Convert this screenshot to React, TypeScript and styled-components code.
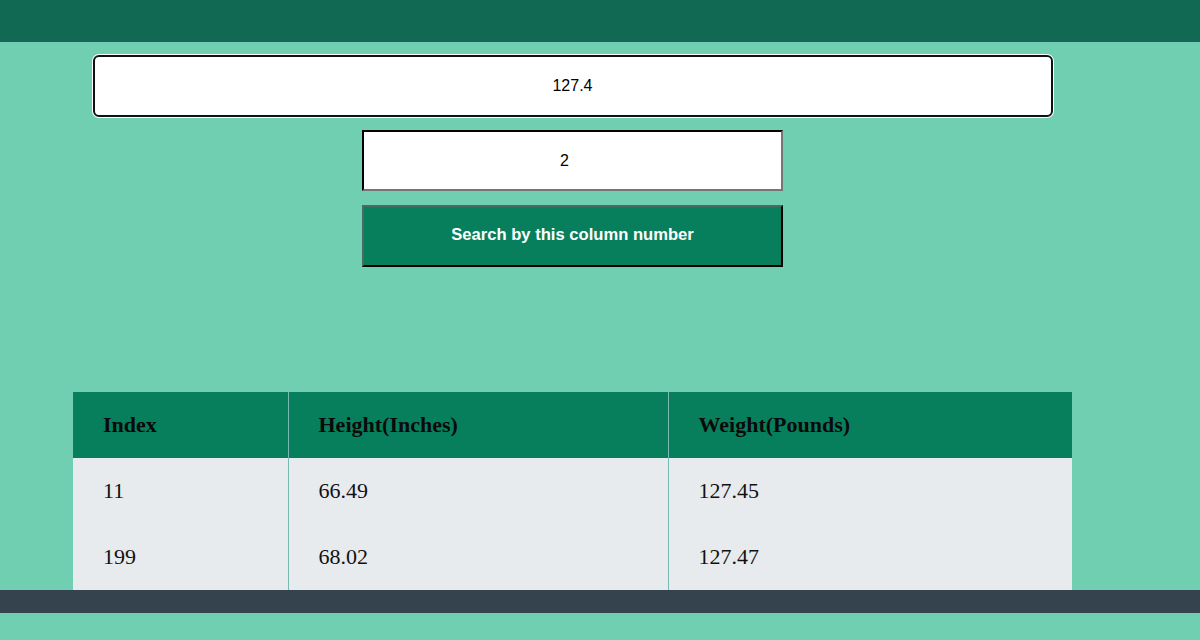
import React, { useState } from "react";
import styled, { createGlobalStyle } from "styled-components";

const GlobalStyle = createGlobalStyle`
  html, body { margin: 0; padding: 0; background: #6fcfb0; }
  body { font-family: "Liberation Serif", "Times New Roman", serif; }
`;

const Page = styled.div`
  min-height: 640px;
  background: #6fcfb0;
  display: flex;
  flex-direction: column;
`;

const TopBar = styled.header`
  height: 42px;
  background: #116853;
`;

const Main = styled.main`
  width: 1145px;
  display: flex;
  flex-direction: column;
  align-items: center;
`;

const SearchInput = styled.input`
  box-sizing: border-box;
  margin-top: 13px;
  width: 960px;
  height: 62px;
  border: 2px solid #111;
  border-radius: 6px;
  box-shadow: 0 0 0 1px #ffffff;
  outline: none;
  background: #fff;
  text-align: center;
  font-family: "Liberation Sans", Arial, sans-serif;
  font-size: 16px;
  color: #000;
  caret-color: #000;
`;

const ColumnInput = styled.input`
  box-sizing: border-box;
  margin-top: 13px;
  width: 421px;
  height: 61px;
  padding-right: 18px;
  border: 2px inset #767676;
  border-top-color: #1a1a1a;
  border-left-color: #1a1a1a;
  background: #fff;
  text-align: center;
  font-family: "Liberation Sans", Arial, sans-serif;
  font-size: 16px;
  color: #000;
  outline: none;
`;

const SearchButton = styled.button`
  box-sizing: border-box;
  margin-top: 14px;
  width: 421px;
  height: 62px;
  padding: 0 0 2px;
  background: #077f5c;
  border: 2px solid #000;
  border-top-color: #4b6a61;
  border-left-color: #4b6a61;
  color: #fff;
  font-family: "Liberation Sans", Arial, sans-serif;
  font-weight: bold;
  font-size: 16.6px;
  cursor: pointer;
`;

const Table = styled.table`
  margin-top: 125px;
  width: 999px;
  border-collapse: collapse;
  table-layout: fixed;
`;

const HeadCell = styled.th<{ $w: number; $last?: boolean }>`
  width: ${(p) => p.$w}px;
  height: 66px;
  box-sizing: border-box;
  padding: 0 0 0 30px;
  background: #077f5c;
  color: #0a0a0a;
  text-align: left;
  font-family: "Liberation Serif", "Times New Roman", serif;
  font-weight: bold;
  font-size: 22px;
  border-right: ${(p) => (p.$last ? "none" : "1px solid #7ab8b2")};
`;

const Cell = styled.td<{ $last?: boolean }>`
  height: 66px;
  box-sizing: border-box;
  padding: 0 0 0 30px;
  background: #e7ebed;
  color: #111;
  font-family: "Liberation Serif", "Times New Roman", serif;
  font-size: 22px;
  border-right: ${(p) => (p.$last ? "none" : "1px solid #7ab8b2")};
`;

const Footer = styled.footer`
  height: 23px;
  background: #35434f;
`;

const columns = [
  { label: "Index", w: 215 },
  { label: "Height(Inches)", w: 380 },
  { label: "Weight(Pounds)", w: 404 },
];

const rows = [
  ["11", "66.49", "127.45"],
  ["199", "68.02", "127.47"],
];

export default function App() {
  const [query, setQuery] = useState("127.4");
  const [col, setCol] = useState("2");
  return (
    <Page>
      <GlobalStyle />
      <TopBar />
      <Main>
        <SearchInput autoFocus value={query} onChange={(e) => setQuery(e.target.value)} />
        <ColumnInput value={col} onChange={(e) => setCol(e.target.value)} />
        <SearchButton>Search by this column number</SearchButton>
        <Table>
          <thead>
            <tr>
              {columns.map((c, i) => (
                <HeadCell key={c.label} $w={c.w} $last={i === columns.length - 1}>
                  {c.label}
                </HeadCell>
              ))}
            </tr>
          </thead>
          <tbody>
            {rows.map((r) => (
              <tr key={r[0]}>
                {r.map((v, i) => (
                  <Cell key={i} $last={i === r.length - 1}>
                    {v}
                  </Cell>
                ))}
              </tr>
            ))}
          </tbody>
        </Table>
      </Main>
      <Footer />
    </Page>
  );
}
